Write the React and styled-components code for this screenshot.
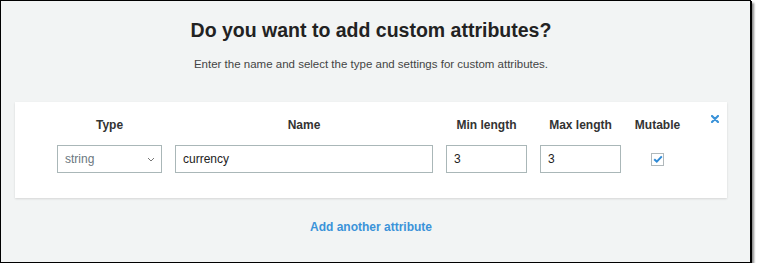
import React from 'react';
import styled, { createGlobalStyle } from 'styled-components';

const GlobalStyle = createGlobalStyle`
    html, body {
        margin:0;
        padding:0;
        background-color:#ffffff;
        font-family:"Liberation Sans", Arial, sans-serif;
    }
`

const Frame = styled.div`
    box-sizing:border-box;
    width:751px;
    height:263px;
    border:1px solid #000;
    box-shadow:1px 1px 0 #000, 3px 3px 2px rgba(0,0,0,0.45);
    background-color:#f2f4f4;
    display:flex;
    flex-direction:column;
    align-items:center;
    padding:0 23px 0 14px;
`

const Title = styled.h1`
    margin:18px 0 0 0;
    font-size:19.5px;
    line-height:22px;
    font-weight:bold;
    color:#222;
`

const Subtitle = styled.p`
    margin:16px 0 0 0;
    font-size:11.5px;
    line-height:14px;
    color:#444;
`

const Panel = styled.div`
    position:relative;
    box-sizing:border-box;
    width:712px;
    height:96px;
    margin-top:31px;
    background-color:#fff;
    box-shadow:0 1px 2px rgba(0,0,0,0.12);
    padding:16px 0 0 42px;
`

const Grid = styled.div`
    display:grid;
    grid-template-columns:105px 258px 81px 81px 47px;
    column-gap:13px;
    row-gap:13px;
    align-items:center;
`

const Header = styled.div`
    text-align:center;
    font-size:12px;
    line-height:14px;
    font-weight:bold;
    color:#333;
    white-space:nowrap;
`

const Field = styled.div`
    box-sizing:border-box;
    height:28px;
    border:1px solid #aab7b8;
    background-color:#fff;
    display:flex;
    align-items:center;
    justify-content:space-between;
    padding:0 6px 0 7px;
    font-size:12px;
    color:${props => props.muted ? '#6b7780' : '#222'};
`

const Chevron = styled.svg`
    width:8px;
    height:5px;
`

const CheckCell = styled.div`
    display:flex;
    justify-content:center;
`

const CheckBox = styled.span`
    box-sizing:border-box;
    width:13px;
    height:13px;
    border:1px solid #b0b8bb;
    background-color:#fff;
    display:flex;
    align-items:center;
    justify-content:center;
`

const Remove = styled.svg`
    position:absolute;
    top:13px;
    right:8px;
    width:8px;
    height:8px;
`

const AddLink = styled.a`
    margin-top:22px;
    font-size:12px;
    line-height:14px;
    font-weight:bold;
    color:#3b93d9;
    text-decoration:none;
    cursor:pointer;
`

const App = () => {
    const headers = ["Type", "Name", "Min length", "Max length", "Mutable"];

    return (
        <Frame>
            <GlobalStyle />
            <Title>Do you want to add custom attributes?</Title>
            <Subtitle>Enter the name and select the type and settings for custom attributes.</Subtitle>
            <Panel>
                <Remove viewBox="0 0 8 8">
                    <path d="M1 1 L7 7 M7 1 L1 7" stroke="#3b93d9" strokeWidth="2.2" strokeLinecap="round" />
                </Remove>
                <Grid>
                    {headers.map(h => <Header key={h}>{h}</Header>)}
                    <Field muted>
                        string
                        <Chevron viewBox="0 0 8 5">
                            <path d="M1 1 L4 4 L7 1" fill="none" stroke="#777" strokeWidth="1" />
                        </Chevron>
                    </Field>
                    <Field>currency</Field>
                    <Field>3</Field>
                    <Field>3</Field>
                    <CheckCell>
                        <CheckBox>
                            <svg width="10" height="8" viewBox="0 0 10 8">
                                <path d="M1.2 4.2 L3.8 6.6 L8.8 1.4" fill="none" stroke="#2f8ad6" strokeWidth="2" />
                            </svg>
                        </CheckBox>
                    </CheckCell>
                </Grid>
            </Panel>
            <AddLink>Add another attribute</AddLink>
        </Frame>
    )
}

export default App;
